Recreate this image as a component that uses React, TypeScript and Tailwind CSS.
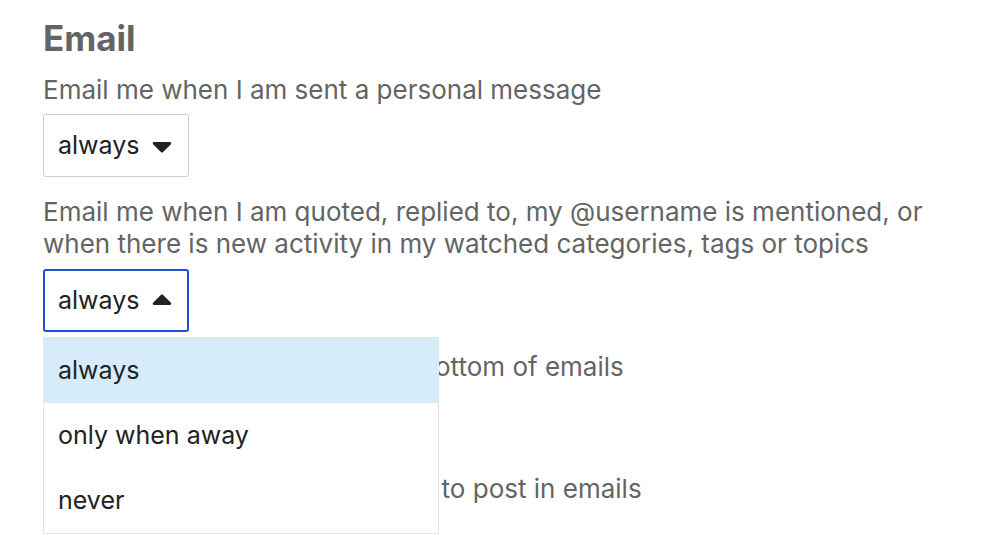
import React from 'react';

const Caret = ({ up }: { up?: boolean }) => (
  <svg
    viewBox="0 0 320 512"
    className="w-[20px] h-[32px] fill-[#222] shrink-0"
    style={{ transform: up ? 'rotate(180deg)' : undefined }}
  >
    <path d="M31.3 192h257.3c17.8 0 26.7 21.5 14.1 34.1L174.1 354.8c-7.8 7.8-20.5 7.8-28.3 0L17.2 226.1C4.6 213.5 13.5 192 31.3 192z" />
  </svg>
);

export default function App() {
  const options = ['always', 'only when away', 'never'];

  return (
    <div className="w-[996px] h-[558px] overflow-hidden bg-white pl-[43px] pt-[14px] font-['Inter',sans-serif] text-[26px]">
      <h2 className="text-[35px] font-bold leading-[48px] text-[#646464]">Email</h2>

      {/* personal message */}
      <div className="mt-[12px] leading-[32px] text-[#646464]">Email me when I am sent a personal message</div>
      <div className="mt-[8px] flex items-center gap-[13px] w-[146px] h-[63px] px-[14px] border border-[#cccccc] rounded-[3px] text-[25px] text-[#222]">
        <span>always</span>
        <Caret />
      </div>

      {/* mentions / watched */}
      <div className="mt-[19px] leading-[32px] text-[#646464] w-[900px]">
        Email me when I am quoted, replied to, my @username is mentioned, or when there is new activity in my watched categories, tags or topics
      </div>
      <div className="relative mt-[9px]">
        <div className="flex items-center gap-[13px] w-[146px] h-[63px] px-[13px] border-[2.5px] border-[#2150d4] rounded-[3px] text-[25px] text-[#222]">
          <span>always</span>
          <Caret up />
        </div>

        {/* open menu */}
        <ul className="absolute left-0 top-[68px] z-10 w-[396px] bg-white border border-[#e6e6e6] text-[25px] text-[#222]">
          {options.map((o, i) => (
            <li
              key={o}
              className={`h-[65px] flex items-center px-[14px] ${i === 0 ? 'bg-[#d6ecfa]' : ''}`}
            >
              {o}
            </li>
          ))}
        </ul>

        {/* covered by the menu */}
        <div className="mt-[19px] leading-[32px] text-[#646464]">Include previous replies at the bottom of emails</div>
        <div className="mt-[14px] w-[240px] h-[63px] border border-[#cccccc] rounded-[3px]" />
        <div className="mt-[13px] flex items-center gap-[20px] leading-[32px] text-[#646464]">
          <span className="w-[20px] h-[20px] border border-[#999] rounded-[2px]" />
          Include an excerpt of replied to post in emails
        </div>
      </div>
    </div>
  );
}
